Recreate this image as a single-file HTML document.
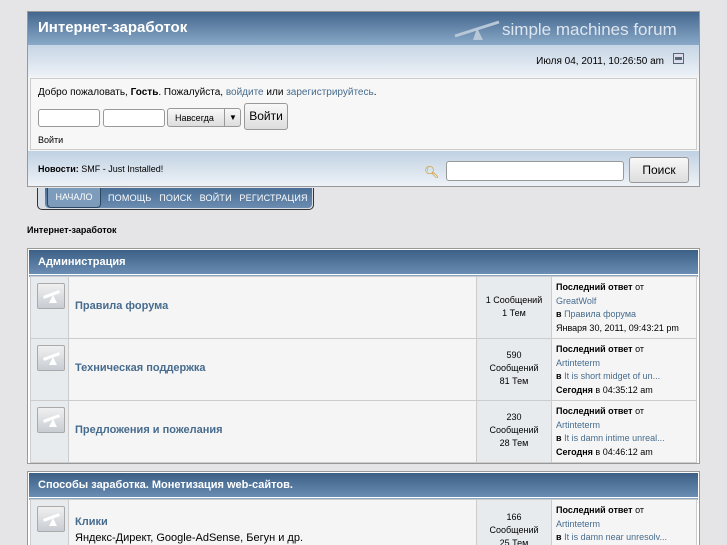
<!DOCTYPE html><html><head><meta charset="utf-8"><style>
*{margin:0;padding:0;box-sizing:border-box}
html{width:727px;height:545px;overflow:hidden}
body{width:727px;height:545px;overflow:hidden;background:#e5e5e8;font-family:"Liberation Sans","DejaVu Sans",sans-serif;font-size:10px;color:#000;position:relative}
.a{position:absolute}
.box{position:absolute;left:27px;width:673px;border:1px solid #999;background:#fff}
.hd{background:linear-gradient(#3c5f86,#6a8db3);color:#fff;font-weight:bold}
a{color:#476c8e;text-decoration:none}
.cell{position:absolute;border:1px solid #ccc;background:#f5f5f5}
.ic{position:absolute;left:6px;top:6px;width:28px;height:26px;border:1px solid #aaa;border-radius:2px;background:linear-gradient(#f0f0f0,#c8cdd3)}
.inp{position:absolute;background:#fff;border:1px solid #999;border-radius:3px}
.btn{position:absolute;border:1px solid #999;border-radius:3px;background:linear-gradient(#f8f8f8,#ddd);font-size:12px;text-align:center}
.st{text-align:center;line-height:13px;font-size:9px;background:#e8ebee}
.lp{padding:4px;line-height:13.5px;font-size:9px}
.ic::after{content:"";position:absolute;left:5px;top:9px;width:17px;height:3px;background:#fff;transform:rotate(-20deg)}
.ic::before{content:"";position:absolute;left:11px;top:11px;border:4px solid transparent;border-bottom:8px solid #fff;border-top:0}
</style></head><body>
<div class="box" style="top:11px;height:176px;background:#f5f5f5">
 <div class="hd a" style="left:0;top:0;width:671px;height:33px;background:linear-gradient(#44678e,#8aa9c8)"><span class="a" style="left:10px;top:7px;font-size:15px">Интернет-заработок</span>
 <svg class="a" style="left:425px;top:6px" width="50" height="22"><path d="M2 18 L46 4" stroke="#b8c8d8" stroke-width="3"/><path d="M20 22 L24 10 L30 22Z" fill="#b8c8d8"/></svg>
 <span class="a" style="left:474px;top:8px;font-size:17px;font-weight:normal;color:#dde6ef">simple machines forum</span></div>
 <div class="a" style="left:0;top:33px;width:671px;height:32px;background:linear-gradient(#c5d5e5,#eef2f7)"><span class="a" style="right:35px;top:11px">Июля 04, 2011, 10:26:50 am</span><div class="a" style="right:15px;top:8px;width:11px;height:11px;border:1px solid #567;background:#dde"><div style="margin:3px 1px;height:3px;background:#567"></div></div></div>
 <div class="a" style="left:2px;top:66px;width:667px;height:72px;background:#f7f7f7;border:1px solid #ccc">
  <div class="a" style="left:7px;top:8px">Добро пожаловать, <b>Гость</b>. Пожалуйста, <a>войдите</a> или <a>зарегистрируйтесь</a>.</div>
  <div class="inp" style="left:7px;top:30px;width:62px;height:18px"></div>
  <div class="inp" style="left:72px;top:30px;width:62px;height:18px"></div>
  <div class="btn" style="left:136px;top:29px;width:74px;height:19px;font-size:9px;text-align:left;padding:4px 7px">Навсегда<span class="a" style="left:56px;top:0;width:17px;height:17px;border-left:1px solid #999;text-align:center;font-size:8px;line-height:17px">▼</span></div>
  <div class="btn" style="left:213px;top:24px;width:44px;height:27px;line-height:25px">Войти</div>
  <div class="a" style="left:7px;top:56px;font-size:9px">Войти</div>
 </div>
 <div class="a" style="left:0;top:139px;width:671px;height:35px;background:linear-gradient(#c0d1e2,#eef2f7)">
  <span class="a" style="left:10px;top:13px;font-size:9px"><b>Новости:</b> SMF - Just Installed!</span>
  <span class="a" style="left:396px;top:14px;color:#c80;font-size:12px">🔍︎</span>
  <div class="inp" style="left:418px;top:10px;width:178px;height:20px"></div>
  <div class="btn" style="left:601px;top:6px;width:60px;height:26px;line-height:24px">Поиск</div>
 </div>
</div>
<div class="a" style="left:37px;top:188px;width:277px;height:22px;border:1px solid #333;border-top:0;border-radius:0 0 5px 5px;background:#d6dde5"></div>
<div class="a" style="left:45px;top:188px;width:267px;height:20px;background:linear-gradient(#4a6e96,#6b8cb0);border-radius:0 0 4px 4px;color:#fff;font-size:9px">
 <div class="a" style="left:2px;top:0;width:54px;height:20px;background:#7d9cbc;border:1px solid #2d4763;border-top:0;border-radius:0 0 4px 4px;text-align:center;line-height:18px">НАЧАЛО</div>
 <span class="a" style="left:63px;top:5px;word-spacing:5px;letter-spacing:.2px">ПОМОЩЬ ПОИСК ВОЙТИ РЕГИСТРАЦИЯ</span></div>
<div class="a" style="left:27px;top:225px;font-size:9px;font-weight:bold">Интернет-заработок</div>

<div class="box" style="top:248px;height:216px">
 <div class="hd a" style="left:1px;top:1px;width:669px;height:24px;padding:6px 9px;font-size:11px">Администрация</div>
 <div class="a" style="left:1px;top:26px;width:669px;height:2px;background:#8aa6c2"></div>
</div>
<div class="box" style="top:471px;height:80px">
 <div class="hd a" style="left:1px;top:1px;width:669px;height:24px;padding:6px 9px;font-size:11px">Способы заработка. Монетизация web-сайтов.</div>
 <div class="a" style="left:1px;top:26px;width:669px;height:2px;background:#8aa6c2"></div>
</div>

<div class="cell" style="left:30px;top:276px;width:39px;height:63px;background:#e8ebee"><div class="ic"></div></div>
<div class="cell" style="left:68px;top:276px;width:409px;height:63px"><a class="a" style="left:6px;top:23px;font-size:11px;font-weight:bold">Правила форума</a></div>
<div class="cell st" style="left:476px;top:276px;width:76px;height:63px;padding-top:17px">1 Сообщений<br>1 Тем</div>
<div class="cell lp" style="left:551px;top:276px;width:146px;height:63px"><b>Последний ответ</b> от<br><a>GreatWolf</a><br><b>в</b> <a>Правила форума</a><br>Января 30, 2011, 09:43:21 pm</div>

<div class="cell" style="left:30px;top:338px;width:39px;height:63px;background:#e8ebee"><div class="ic"></div></div>
<div class="cell" style="left:68px;top:338px;width:409px;height:63px"><a class="a" style="left:6px;top:23px;font-size:11px;font-weight:bold">Техническая поддержка</a></div>
<div class="cell st" style="left:476px;top:338px;width:76px;height:63px;padding-top:10px">590<br>Сообщений<br>81 Тем</div>
<div class="cell lp" style="left:551px;top:338px;width:146px;height:63px"><b>Последний ответ</b> от<br><a>Artinteterm</a><br><b>в</b> <a>It is short midget of un...</a><br><b>Сегодня</b> в 04:35:12 am</div>

<div class="cell" style="left:30px;top:400px;width:39px;height:63px;background:#e8ebee"><div class="ic"></div></div>
<div class="cell" style="left:68px;top:400px;width:409px;height:63px"><a class="a" style="left:6px;top:23px;font-size:11px;font-weight:bold">Предложения и пожелания</a></div>
<div class="cell st" style="left:476px;top:400px;width:76px;height:63px;padding-top:10px">230<br>Сообщений<br>28 Тем</div>
<div class="cell lp" style="left:551px;top:400px;width:146px;height:63px"><b>Последний ответ</b> от<br><a>Artinteterm</a><br><b>в</b> <a>It is damn intime unreal...</a><br><b>Сегодня</b> в 04:46:12 am</div>

<div class="cell" style="left:30px;top:499px;width:39px;height:63px;background:#e8ebee"><div class="ic"></div></div>
<div class="cell" style="left:68px;top:499px;width:409px;height:63px"><a class="a" style="left:6px;top:16px;font-size:11px;font-weight:bold">Клики</a><span class="a" style="left:6px;top:32px;font-size:11px">Яндекс-Директ, Google-AdSense, Бегун и др.</span></div>
<div class="cell st" style="left:476px;top:499px;width:76px;height:63px;padding-top:11px">166<br>Сообщений<br>25 Тем</div>
<div class="cell lp" style="left:551px;top:499px;width:146px;height:63px"><b>Последний ответ</b> от<br><a>Artinteterm</a><br><b>в</b> <a>It is damn near unresolv...</a></div>
</body></html>
